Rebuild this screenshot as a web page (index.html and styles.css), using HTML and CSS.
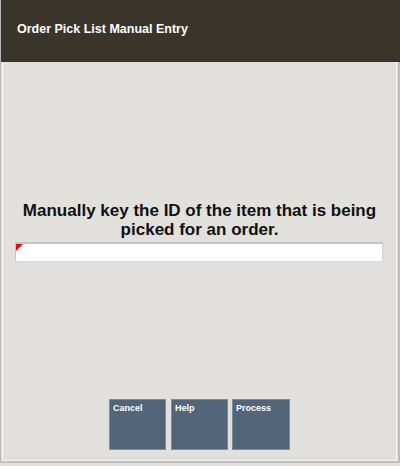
FILE: index.html
```html
<!DOCTYPE html>
<html>
<head>
<meta charset="utf-8">
<link rel="stylesheet" href="styles.css">
</head>
<body>
<div class="screen">
  <div class="header"><span class="title">Order Pick List Manual Entry</span></div>
  <div class="content">
    <div class="prompt">Manually key the ID of the item that is being<br>picked for an order.</div>
    <div class="entry"><span class="marker"></span></div>
  </div>
  <div class="buttons">
    <div class="btn">Cancel</div>
    <div class="btn">Help</div>
    <div class="btn">Process</div>
  </div>
</div>
</body>
</html>
```
FILE: styles.css
```css
html, body {
  margin: 0;
  padding: 0;
  background: #e1e0dc;
}
.screen {
  width: 400px;
  height: 463px;
  box-sizing: border-box;
  position: relative;
  display: flex;
  flex-direction: column;
  font-family: "Liberation Sans", Arial, sans-serif;
  border-left: 1px solid #b8b8b8;
  border-right: 2px solid #bcbcbc;
  border-bottom: 2px solid #c0c0c0;
  background: #e1e0dc;
}
.screen::after {
  content: "";
  position: absolute;
  left: 1px;
  right: 1px;
  top: 62px;
  bottom: 0;
  border-left: 1px solid #f4f4f2;
  border-right: 1px solid #f4f4f2;
  border-bottom: 1px solid #f4f4f2;
  pointer-events: none;
}
.header {
  height: 62px;
  background: #3a352b;
  margin-right: -2px;
  box-sizing: border-box;
  padding: 19px 0 0 16px;
}
.title {
  color: #ffffff;
  font-weight: bold;
  font-size: 12.5px;
}
.content {
  flex: 1;
  display: flex;
  flex-direction: column;
  align-items: center;
  padding-top: 139px;
}
.prompt {
  font-weight: bold;
  font-size: 17px;
  line-height: 19px;
  text-align: center;
  color: #111;
}
.entry {
  margin-top: 3px;
  margin-left: 14px;
  align-self: flex-start;
  width: 368px;
  height: 20px;
  box-sizing: border-box;
  background: #fff;
  border-top: 2px solid #c4c4c4;
  border-left: 1px solid #c4c4c4;
  border-right: 1px solid #d0d0d0;
  border-bottom: 1px solid #d8d8d8;
  position: relative;
}
.marker {
  position: absolute;
  left: 0;
  top: 0;
  width: 0;
  height: 0;
  border-top: 7px solid #ff0000;
  border-right: 7px solid transparent;
}
.buttons {
  display: flex;
  gap: 5px;
  padding-left: 108px;
  height: 62px;
  box-sizing: border-box;
}
.btn {
  width: 57px;
  height: 51px;
  box-sizing: border-box;
  background: #536579;
  border: 1px solid #7d8a97;
  color: #fff;
  font-weight: bold;
  font-size: 9px;
  padding: 3px 0 0 3px;
}
.btn:nth-child(3) { width: 58px; margin-left: -1px; }
```
